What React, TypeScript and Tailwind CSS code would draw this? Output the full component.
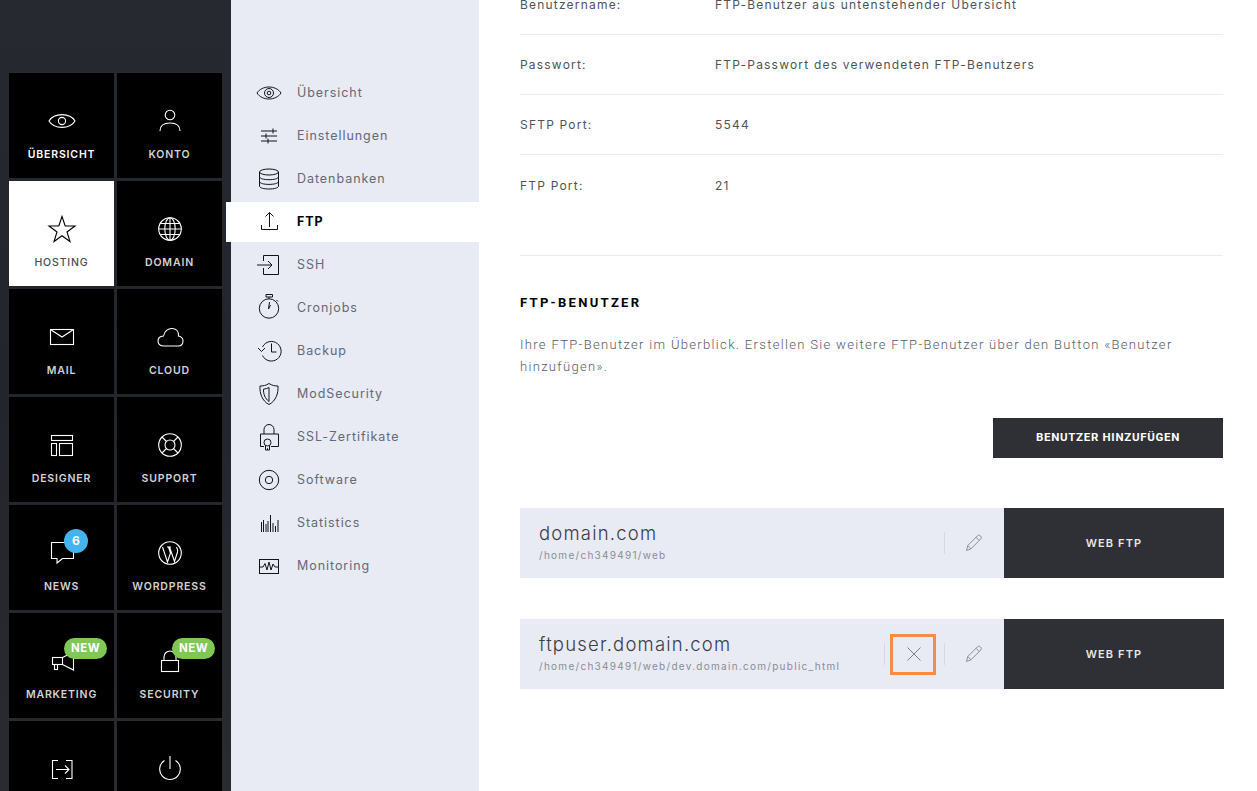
import type { ReactNode } from "react";

const sans = "font-['Inter','Liberation_Sans',sans-serif]";

// tile icons, drawn on a 36x36 box
const tileIcons: Record<string, ReactNode> = {
  eye: (
    <>
      <path d="M5 18C10 9.5 26 9.5 31 18C26 26.5 10 26.5 5 18Z" />
      <circle cx="18" cy="18" r="3.6" />
    </>
  ),
  person: (
    <>
      <circle cx="18" cy="12" r="4.8" />
      <path d="M8 28C8 22 12 20 18 20S28 22 28 28" />
    </>
  ),
  star: <path d="M18 5.5L21.2 15H31L23 21L26 30.5L18 24.7L10 30.5L13 21L5 15H14.8Z" />,
  globe: (
    <>
      <circle cx="18" cy="18" r="11.3" />
      <ellipse cx="18" cy="18" rx="5.2" ry="11.3" />
      <path d="M18 6.7V29.3M6.7 18H29.3M8.2 12.5H27.8M8.2 23.5H27.8" />
    </>
  ),
  mail: (
    <>
      <rect x="6.5" y="10.5" width="23" height="15" />
      <path d="M6.5 10.5L18 18L29.5 10.5" />
    </>
  ),
  cloud: <path d="M11 27C7.5 27 6 24.5 6 22C6 19 8.5 17.2 11.5 17C12.5 12 16.5 9 20.5 9.5C24.5 10 27 13 26.5 17C29 17.5 31 19.5 31 22C31 25 29 27 26 27Z" />,
  layout: (
    <>
      <rect x="7.5" y="8.5" width="21" height="5" />
      <rect x="7.5" y="16.5" width="5" height="12" />
      <rect x="15.5" y="16.5" width="13" height="12" />
    </>
  ),
  support: (
    <>
      <circle cx="18" cy="18" r="11.3" />
      <circle cx="18" cy="18" r="5" />
      <path d="M10 10L14.5 14.5M26 10L21.5 14.5M10 26L14.5 21.5M26 26L21.5 21.5" />
    </>
  ),
  news: <path d="M7.5 7.5H29.5V23.5H18.5L13 28V23.5H7.5Z" />,
  wordpress: (
    <>
      <circle cx="18" cy="18" r="11.3" />
      <path d="M10.5 12L15.5 27L18.5 18L16.5 12M15 12H19M17.5 12L22.5 26.5L25.5 17C26 15 25 13 24.5 12" />
    </>
  ),
  megaphone: (
    <>
      <rect x="8.5" y="14.5" width="10" height="7" />
      <rect x="10.5" y="21.5" width="3" height="5" />
      <path d="M18.5 14.5L29.5 9V27L18.5 21.5" />
    </>
  ),
  lock: (
    <>
      <rect x="9.5" y="17.5" width="17" height="11" />
      <path d="M12 17.5V14A6 6 0 0 1 24 14V17.5" />
    </>
  ),
  login: (
    <>
      <path d="M14 9.5H8.5V27.5H14M22 9.5H28V27.5H22" />
      <path d="M12 18.5H25M21 14.5L25 18.5L21 22.5" />
    </>
  ),
  power: (
    <>
      <path d="M18 5V18" />
      <path d="M12.5 9.5A10.3 10.3 0 1 0 23.5 9.5" />
    </>
  ),
};

// submenu icons, drawn on a 30x30 box
const menuIcons: Record<string, ReactNode> = {
  eye: (
    <>
      <path d="M3 15C8 7 22 7 27 15C22 23 8 23 3 15Z" />
      <circle cx="15" cy="15" r="4.5" />
      <circle cx="15" cy="15" r="1.8" />
    </>
  ),
  sliders: <path d="M7 10H23M7 15H23M7 20H23M19 7.5V12.5M12 12.5V17.5M14 17.5V22.5" />,
  database: (
    <>
      <ellipse cx="15" cy="8" rx="9.5" ry="3" />
      <path d="M5.5 8V22C5.5 24 10 25 15 25S24.5 24 24.5 22V8M5.5 12.7C5.5 14.7 10 15.7 15 15.7S24.5 14.7 24.5 12.7M5.5 17.4C5.5 19.4 10 20.4 15 20.4S24.5 19.4 24.5 17.4" />
    </>
  ),
  upload: <path d="M7.5 18V22.5H23.5V18M15.500 20V5.5M11.500 9.500L15.500 5.500L19.500 9.500" />,
  ssh: (
    <>
      <path d="M9.500 11V5.500H24.500V24.500H9.500V18" />
      <path d="M3 15H18M14 11L18 15L14 19" />
    </>
  ),
  timer: (
    <>
      <circle cx="15" cy="15.500" r="9.700" />
      <path d="M12 1.500H18.500V4H12ZM15 4V5.800M15.500 9L14.500 16L16.500 12M22.500 7L24 8.500" />
    </>
  ),
  backup: (
    <>
      <path d="M8.500 11A9.800 9.800 0 1 1 8.500 19.500" />
      <path d="M4 12L7.500 15.500L11 12M17.500 7.500V16H22.500" />
    </>
  ),
  shield: (
    <>
      <path d="M15 4.500C18 6.500 21 7 24 7C24.500 14 22 22 15 25.500C8 22 5.500 14 6 7C9 7 12 6.500 15 4.500Z" />
      <path d="M15 8.500C13 9.500 11.500 10 9.500 10.200C9.300 15 11 19.500 15 22.500Z" />
    </>
  ),
  ssl: (
    <>
      <path d="M10 12V7.500A5 5 0 0 1 20 7.500V12" />
      <path d="M10 24.500H6.500V12H24.500V24.500H17" />
      <circle cx="13.500" cy="20.500" r="3.500" />
      <path d="M11.500 23.500V28H13.500V26.500H13.500V28H15.500V23.500" />
    </>
  ),
  disc: (
    <>
      <circle cx="15" cy="15" r="9.700" />
      <circle cx="15" cy="15" r="3.700" />
    </>
  ),
  bars: <path d="M7.500 14V24M9.500 12V24M12 16V24M14 13V24M16.500 7V24M19 15V24M21.500 18V24M24 12V24" />,
  monitor: (
    <>
      <rect x="5.500" y="8.500" width="19" height="14" />
      <path d="M5.500 16H9L11 12.500L13 19L15 11L17 19L19 13L21 16H24.500" />
    </>
  ),
};

const tiles = [
  { label: "ÜBERSICHT", icon: "eye", text: "text-white" },
  { label: "KONTO", icon: "person" },
  { label: "HOSTING", icon: "star", active: true },
  { label: "DOMAIN", icon: "globe" },
  { label: "MAIL", icon: "mail" },
  { label: "CLOUD", icon: "cloud" },
  { label: "DESIGNER", icon: "layout" },
  { label: "SUPPORT", icon: "support" },
  { label: "NEWS", icon: "news", count: "6" },
  { label: "WORDPRESS", icon: "wordpress" },
  { label: "MARKETING", icon: "megaphone", isNew: true },
  { label: "SECURITY", icon: "lock", isNew: true },
  { label: "", icon: "login" },
  { label: "", icon: "power" },
];

const menu = [
  { label: "Übersicht", icon: "eye" },
  { label: "Einstellungen", icon: "sliders" },
  { label: "Datenbanken", icon: "database" },
  { label: "FTP", icon: "upload", active: true },
  { label: "SSH", icon: "ssh" },
  { label: "Cronjobs", icon: "timer" },
  { label: "Backup", icon: "backup" },
  { label: "ModSecurity", icon: "shield" },
  { label: "SSL-Zertifikate", icon: "ssl" },
  { label: "Software", icon: "disc" },
  { label: "Statistics", icon: "bars" },
  { label: "Monitoring", icon: "monitor" },
];

const infoRows = [
  ["Benutzername:", "FTP-Benutzer aus untenstehender Übersicht"],
  ["Passwort:", "FTP-Passwort des verwendeten FTP-Benutzers"],
  ["SFTP Port:", "5544"],
  ["FTP Port:", "21"],
];

function Tile({ tile }: { tile: (typeof tiles)[number] }) {
  return (
    <div
      className={`relative flex h-[105px] w-[105px] flex-col items-center pt-[30px] ${
        tile.active ? "bg-white text-[#4a4d54]" : "bg-black text-[#d2d2d2]"
      }`}
    >
      <svg
        viewBox="0 0 36 36"
        fill="none"
        strokeWidth="1.1"
        className={`h-9 w-9 ${tile.active ? "stroke-black" : "stroke-white"}`}
      >
        {tileIcons[tile.icon]}
      </svg>
      {tile.label && (
        <div
          className={`mt-[9px] text-[10.5px] leading-[14px] tracking-[0.85px] ${
            tile.active ? "font-medium" : "font-semibold"
          } ${tile.text ?? ""}`}
        >
          {tile.label}
        </div>
      )}
      {tile.count && (
        <span className="absolute left-[55px] top-[24px] flex h-6 w-6 items-center justify-center rounded-full bg-[#45b4ee] text-[12px] font-bold text-white">
          {tile.count}
        </span>
      )}
      {tile.isNew && (
        <span className="absolute left-[55px] top-[25px] flex h-[21px] w-[43px] items-center justify-center rounded-full bg-[#7fc856] text-[11.5px] font-bold tracking-[0.5px] text-white">
          NEW
        </span>
      )}
    </div>
  );
}

function FtpCard({ name, path, canDelete }: { name: string; path: string; canDelete?: boolean }) {
  return (
    <div className="flex h-[70px] w-[704px] items-stretch bg-[#e8eaf4]">
      <div className="flex-1 pl-[19px] pt-[13px]">
        <div className="text-[18.5px] font-light leading-[24px] tracking-[1.2px] text-[#3a3e47]">{name}</div>
        <div className="mt-[3px] text-[10px] leading-[14px] tracking-[1.28px] text-[#8a8d95]">{path}</div>
      </div>
      <div className="flex items-center">
        {canDelete && (
          <>
            <div className="h-[22px] w-px bg-[#d5d8e8]" />
            <div className="ml-[5px] flex h-[41px] w-[46px] items-center justify-center border-[3px] border-[#f58b45] pl-[1px]">
              <svg viewBox="0 0 16 16" fill="none" strokeWidth="1" className="h-4 w-4 stroke-[#7d8087]">
                <path d="M1.500 1.500L14.500 14.500M14.500 1.500L1.500 14.500" />
              </svg>
            </div>
            <div className="w-2" />
          </>
        )}
        <div className="h-[22px] w-px bg-[#d5d8e8]" />
        <div className="flex w-[59px] justify-center pr-[1px]">
          <svg viewBox="0 0 18 18" fill="none" strokeWidth="1" className="h-[18px] w-[18px] stroke-[#8d9096]">
            <path d="M1.500 16.500L2.800 11.500L12.500 1.800C13.300 1 14.500 1 15.500 2C16.500 3 16.500 4.200 15.700 5L6 14.800ZM2.800 11.500L6 14.800M11 3.300L14.200 6.500" />
          </svg>
        </div>
        <div className="flex h-full w-[220px] items-center justify-center bg-[#2f3035] pt-[1px] text-[11px] font-semibold tracking-[1.1px] text-[#e6e6e6]">
          WEB FTP
        </div>
      </div>
    </div>
  );
}

export default function App() {
  return (
    <div className={`flex h-[791px] w-[1257px] overflow-hidden bg-white ${sans}`}>
      {/* main nav */}
      <div className="h-full w-[231px] shrink-0 bg-gradient-to-b from-[#262930] via-[#23252c] to-[#2a2b30] pl-[9px] pt-[73px]">
        <div className="grid grid-cols-[105px_105px] gap-[3px]">
          {tiles.map((tile) => (
            <Tile key={tile.icon} tile={tile} />
          ))}
        </div>
      </div>

      {/* sub nav */}
      <div className="relative h-full w-[248px] shrink-0 bg-[#e8eaf4] pt-[73px]">
        <div className="flex flex-col gap-[3px]">
          {menu.map((item) => (
            <div
              key={item.label}
              className={`flex h-[40px] items-center ${
                item.active ? "relative -ml-[5px] bg-white pl-[28px]" : "pl-[23px]"
              }`}
            >
              <svg viewBox="0 0 30 30" fill="none" strokeWidth="1" className="h-[30px] w-[30px] stroke-[#111317]">
                {menuIcons[item.icon]}
              </svg>
              <span
                className={`ml-[13px] text-[12.5px] tracking-[0.95px] ${
                  item.active ? "font-bold text-black" : "text-[#646975]"
                }`}
              >
                {item.label}
              </span>
            </div>
          ))}
        </div>
      </div>

      {/* content */}
      <div className="flex-1 pl-[41px]">
        <div className="-mt-[25px] w-[703px]">
          {infoRows.map(([label, value], i) => (
            <div
              key={label}
              className={`flex h-[60px] items-center text-[12px] tracking-[1.2px] text-[#50535b] ${
                i < 3 ? "border-b border-[#e8eaf4]" : "pt-[1px]"
              }`}
            >
              <div className="w-[195px]">{label}</div>
              <div>{value}</div>
            </div>
          ))}
          <div className="mt-[40px] border-t border-[#e8eaf4] pt-[37px]">
            <h2 className="font-['Roboto',sans-serif] text-[13px] font-bold leading-[20px] tracking-[2.3px] text-black">
              FTP-BENUTZER
            </h2>
            <p className="mt-[21px] font-['Roboto',sans-serif] text-[13px] font-light leading-[22px] tracking-[1.33px] text-[#555c68]">
              Ihre FTP-Benutzer im Überblick. Erstellen Sie weitere FTP-Benutzer über den Button «Benutzer hinzufügen».
            </p>
            <div className="mt-[40px] flex justify-end">
              <div className="flex h-[40px] w-[230px] items-center justify-center bg-[#2f3035] font-['Roboto',sans-serif] text-[11.5px] font-bold tracking-[0.7px] text-white">
                BENUTZER HINZUFÜGEN
              </div>
            </div>
          </div>
        </div>
        <div className="mt-[50px] flex flex-col gap-[41px]">
          <FtpCard name="domain.com" path="/home/ch349491/web" />
          <FtpCard name="ftpuser.domain.com" path="/home/ch349491/web/dev.domain.com/public_html" canDelete />
        </div>
      </div>
    </div>
  );
}
